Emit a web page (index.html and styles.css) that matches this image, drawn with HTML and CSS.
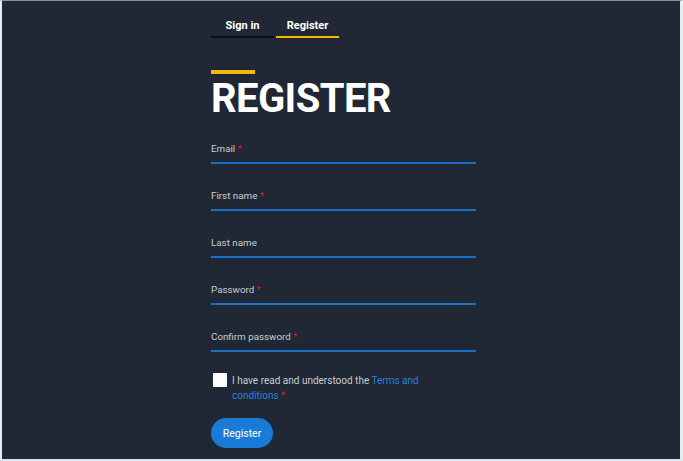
FILE: index.html
```html
<!DOCTYPE html>
<html lang="en">
	<head>
		<meta charset="UTF-8" />
		<meta name="viewport" content="width=device-width, initial-scale=1.0" />
		<title>Register</title>
		<link rel="stylesheet" href="styles.css">
	</head>
	<body>
		<div class="frame">
			<div class="column">
				<div class="tabs">
					<a class="tab" href="#">Sign in</a>
					<a class="tab active" href="#">Register</a>
				</div>

				<div class="title-bar"></div>
				<h1>REGISTER</h1>

				<form class="form">
					<label class="field">
						<span class="label">Email <span class="req">*</span></span>
						<input type="email" class="input">
					</label>
					<label class="field">
						<span class="label">First name <span class="req">*</span></span>
						<input type="text" class="input">
					</label>
					<label class="field">
						<span class="label">Last name</span>
						<input type="text" class="input">
					</label>
					<label class="field">
						<span class="label">Password <span class="req">*</span></span>
						<input type="password" class="input">
					</label>
					<label class="field">
						<span class="label">Confirm password <span class="req">*</span></span>
						<input type="password" class="input">
					</label>

					<div class="terms">
						<span class="checkbox"></span>
						<span class="terms-text">I have read and understood the <a href="#">Terms and conditions</a> <span class="req">*</span></span>
					</div>

					<button type="button" class="btn">Register</button>
				</form>
			</div>
		</div>
	</body>
</html>
```

FILE: styles.css
```css
:root {
	--bg-color: #1f2834;
	--text-color: #ffffff;
	--label-color: #c8ccd2;
	--line-blue: #1b6fc4;
	--link-blue: #2a7fd8;
	--yellow: #f5b50f;
	--red: #d0202c;
}

* {
	margin: 0;
	padding: 0;
	box-sizing: border-box;
}

body {
	font-family: Roboto, "Liberation Sans", sans-serif;
	background: #e9ecef;
	color: var(--text-color);
}

.frame {
	width: 683px;
	height: 461px;
	background-color: var(--bg-color);
	border-top: 1px solid #8d9096;
	border-left: 2px solid #e9ecef;
	border-right: 3px solid #e9ecef;
	border-bottom: 2px solid #dde3ea;
	overflow: hidden;
}

.column {
	width: 265px;
	margin-left: 209px;
	padding-top: 18px;
}

.tabs {
	display: flex;
	gap: 2px;
}

.tab {
	width: 63px;
	text-align: center;
	color: var(--text-color);
	text-decoration: none;
	font-size: 11px;
	font-weight: 700;
	padding-bottom: 4px;
	border-bottom: 2px solid #0a0d12;
	line-height: 13px;
}

.tab.active {
	border-bottom-color: var(--yellow);
}

.title-bar {
	width: 44px;
	height: 4px;
	background: var(--yellow);
	margin-top: 32px;
}

h1 {
	font-size: 40px;
	font-weight: 700;
	line-height: 44px;
	margin-top: 3px;
	letter-spacing: -0.6px;
}

.form {
	display: flex;
	flex-direction: column;
	margin-top: 21px;
}

.field {
	display: flex;
	flex-direction: column;
	margin-bottom: 25px;
}

.label {
	font-size: 9.8px;
	color: var(--label-color);
	line-height: 13px;
}

.req {
	color: var(--red);
}

.input {
	background: transparent;
	border: none;
	border-bottom: 2px solid var(--line-blue);
	height: 9px;
	outline: none;
	color: var(--text-color);
}

.terms {
	display: flex;
	gap: 5px;
	margin-top: -5px;
	padding-left: 2px;
}

.checkbox {
	width: 14px;
	height: 14px;
	background: #ffffff;
	border-radius: 1px;
	flex-shrink: 0;
	margin-top: 1px;
}

.terms-text {
	width: 200px;
	font-size: 10px;
	line-height: 15px;
	padding-top: 1px;
	color: var(--label-color);
}

.terms-text a {
	color: var(--link-blue);
	text-decoration: none;
}

.btn {
	align-self: flex-start;
	margin-top: 15px;
	width: 62px;
	height: 30px;
	border: none;
	border-radius: 15px;
	background: #1a7bd6;
	color: var(--text-color);
	font-family: inherit;
	font-size: 10.5px;
}
```
